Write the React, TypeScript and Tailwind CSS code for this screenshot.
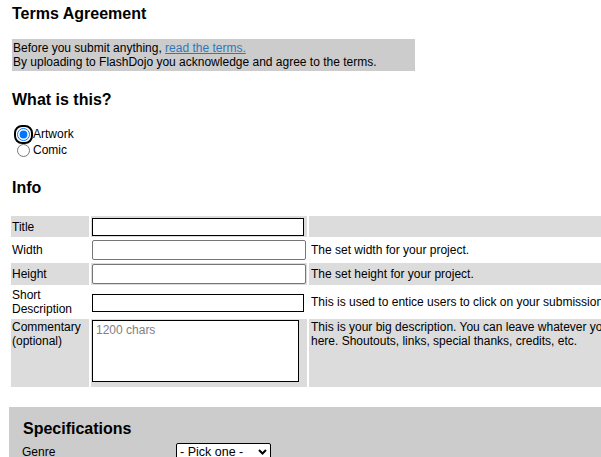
export default function App() {
  return (
    <div className="h-[457px] w-[601px] overflow-hidden bg-white px-3 font-['Liberation_Sans',Arial,sans-serif] text-[12px] leading-[14px] text-black">
      <h2 className="mt-[5px] text-[16px] font-bold leading-[18px]">Terms Agreement</h2>

      <div className="mt-4 w-[403px] bg-[#cccccc] px-px py-[2px]">
        <p>
          Before you submit anything,{" "}
          <a href="#" className="text-[#2f78ba] underline">
            read the terms.
          </a>
        </p>
        <p>By uploading to FlashDojo you acknowledge and agree to the terms.</p>
      </div>

      <h2 className="mt-5 text-[16px] font-bold leading-[18px]">What is this?</h2>

      <div className="mt-[17px] flex flex-col">
        <label className="flex h-4 items-center">
          <span className="ml-[4px] mr-[2px] flex size-[15px] items-center justify-center rounded-[6px] outline-2 outline-black">
            <input type="radio" name="kind" defaultChecked className="m-0 size-[13px]" />
          </span>
          Artwork
        </label>
        <label className="flex h-4 items-center">
          <input type="radio" name="kind" className="m-0 ml-[5px] mr-[3px] size-[13px]" />
          Comic
        </label>
      </div>

      <h2 className="mt-[21px] text-[16px] font-bold leading-[18px]">Info</h2>

      <div className="ml-[-1px] mt-[19px] grid w-max grid-cols-[78px_216px_350px] grid-rows-[21px_22px_22px_30px_68px] gap-[2px]">
        <div className="flex items-center bg-[#dcdcdc] pl-px">Title</div>
        <div className="flex items-center bg-[#dcdcdc] pl-px">
          <input type="text" className="h-[18px] w-[212px] border border-black bg-white px-[2px]" />
        </div>
        <div className="bg-[#dcdcdc]" />

        <div className="flex items-center pl-px">Width</div>
        <div className="flex items-center pl-px">
          <input type="text" className="h-[20px] w-[214px] rounded-[2px] border border-[#767676] bg-white px-[2px]" />
        </div>
        <div className="flex items-center pl-[2px]">The set width for your project.</div>

        <div className="flex items-center bg-[#dcdcdc] pl-px">Height</div>
        <div className="flex items-center bg-[#dcdcdc] pl-px">
          <input type="text" className="h-[20px] w-[214px] rounded-[2px] border border-[#767676] bg-white px-[2px]" />
        </div>
        <div className="flex items-center bg-[#dcdcdc] pl-[2px]">The set height for your project.</div>

        <div className="flex items-center pl-px">Short Description</div>
        <div className="flex items-center pl-px">
          <input type="text" className="mt-[2px] h-[18px] w-[212px] border border-black bg-white px-[2px]" />
        </div>
        <div className="flex items-center whitespace-nowrap pl-[2px]">
          This is used to entice users to click on your submission.
        </div>

        <div className="bg-[#dcdcdc] pl-px pt-px">Commentary (optional)</div>
        <div className="bg-[#dcdcdc] pl-px pt-px">
          <textarea
            placeholder="1200 chars"
            className="block h-[62px] w-[207px] resize-none border border-black bg-white px-[3px] py-[2px] placeholder:text-[#808080]"
          />
        </div>
        <div className="bg-[#dcdcdc] pl-[2px] pr-[8px] pt-px">
          This is your big description. You can leave whatever you want here. Shoutouts, links, special thanks,
          credits, etc.
        </div>
      </div>

      <div className="-mr-3 ml-[-3px] mt-5 bg-[#cccccc] pb-4 pl-[13px] pt-[13px]">
        <h2 className="ml-px text-[16px] font-bold leading-[18px]">Specifications</h2>
        <div className="mt-[4px] flex h-5 items-center">
          <span className="w-[154px]">Genre</span>
          <div className="relative">
            <select className="h-[19px] w-[95px] appearance-none rounded-[2px] border border-black bg-white pl-[3px] text-[12.5px] leading-[14px]">
              <option>- Pick one -</option>
              <option>Action</option>
              <option>Comedy</option>
            </select>
            <svg
              className="pointer-events-none absolute right-[4px] top-[6px]"
              width="9"
              height="6"
              viewBox="0 0 9 6"
              fill="none"
            >
              <path d="M1 1l3.5 3.5L8 1" stroke="black" strokeWidth="2" />
            </svg>
          </div>
        </div>
      </div>
    </div>
  );
}
